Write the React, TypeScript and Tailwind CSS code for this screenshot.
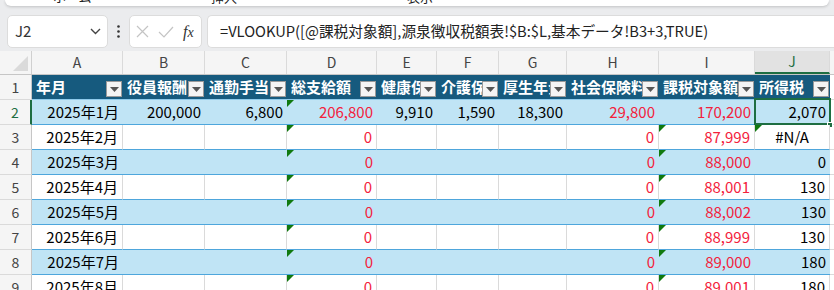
import React from "react";

const font = { fontFamily: '"Noto Sans CJK JP", "Noto Sans", sans-serif' };

const cols = [
  { l: "A", w: "w-[91px]", h: "年月" },
  { l: "B", w: "w-[82px]", h: "役員報酬" },
  { l: "C", w: "w-[82px]", h: "通勤手当" },
  { l: "D", w: "w-[90px]", h: "総支給額" },
  { l: "E", w: "w-[60px]", h: "健康保険料" },
  { l: "F", w: "w-[62px]", h: "介護保険料" },
  { l: "G", w: "w-[68px]", h: "厚生年金保険料" },
  { l: "H", w: "w-[92px]", h: "社会保険料計" },
  { l: "I", w: "w-[96px]", h: "課税対象額" },
  { l: "J", w: "w-[75px]", h: "所得税" },
];

const red = [3, 7, 8];

const rows: string[][] = [
  ["2025年1月", "200,000", "6,800", "206,800", "9,910", "1,590", "18,300", "29,800", "170,200", "2,070"],
  ["2025年2月", "", "", "0", "", "", "", "0", "87,999", "#N/A"],
  ["2025年3月", "", "", "0", "", "", "", "0", "88,000", "0"],
  ["2025年4月", "", "", "0", "", "", "", "0", "88,001", "130"],
  ["2025年5月", "", "", "0", "", "", "", "0", "88,002", "130"],
  ["2025年6月", "", "", "0", "", "", "", "0", "88,999", "130"],
  ["2025年7月", "", "", "0", "", "", "", "0", "89,000", "180"],
  ["2025年8月", "", "", "0", "", "", "", "0", "89,001", "180"],
];

function Flag() {
  return (
    <svg className="absolute left-0 top-0" width="7" height="7" viewBox="0 0 7 7">
      <polygon points="0,0 7,0 0,7" fill="#10790f" />
    </svg>
  );
}

function FilterButton() {
  return (
    <div className="absolute right-[1px] bottom-[2px] w-[16px] h-[16px] bg-[#f4f4f4] border border-[#9a9a9a] flex items-center justify-center">
      <svg width="9" height="5" viewBox="0 0 9 5">
        <polygon points="0,0 9,0 4.5,5" fill="#555" />
      </svg>
    </div>
  );
}

export default function App() {
  return (
    <div className="w-[834px] h-[290px] overflow-hidden bg-[#ebecee] text-black" style={font}>
      {/* ribbon bottom edge */}
      <div className="mx-[5px] h-[6px] bg-white rounded-b-md shadow-[0_1px_3px_rgba(0,0,0,0.18)] overflow-hidden relative text-[13px] leading-none text-[#222]">
        <span className="absolute left-[48px] -top-[10px]">ホーム</span>
        <span className="absolute left-[206px] -top-[10px]">挿入</span>
        <span className="absolute left-[402px] -top-[10px]">表示</span>
      </div>

      {/* formula bar */}
      <div className="flex items-center h-[33px] mt-[9px] pl-[7px]">
        <div className="w-[101px] h-[33px] bg-white rounded-[5px] border border-[#dcdcdc] flex items-center justify-between pl-[7px] pr-[6px] text-[15px] text-[#333]">
          <span>J2</span>
          <svg width="11" height="7" viewBox="0 0 11 7">
            <path d="M1 1 L5.5 5.5 L10 1" stroke="#444" strokeWidth="1.4" fill="none" />
          </svg>
        </div>
        <div className="w-[21px] flex justify-center">
          <svg width="3" height="13" viewBox="0 0 3 13">
            <circle cx="1.5" cy="1.5" r="1.3" fill="#333" />
            <circle cx="1.5" cy="6.5" r="1.3" fill="#333" />
            <circle cx="1.5" cy="11.5" r="1.3" fill="#333" />
          </svg>
        </div>
        <div className="w-[73px] h-[33px] bg-white rounded-[5px] border border-[#dcdcdc] flex items-center pl-[6px] gap-[9px]">
          <svg width="13" height="13" viewBox="0 0 13 13">
            <path d="M1 1 L12 12 M12 1 L1 12" stroke="#c4c4c4" strokeWidth="1.2" />
          </svg>
          <svg width="16" height="12" viewBox="0 0 16 12">
            <path d="M1 6 L6 11 L15 1" stroke="#c4c4c4" strokeWidth="1.2" fill="none" />
          </svg>
          <span className="text-[16px] italic text-[#333] leading-none" style={{ fontFamily: '"Liberation Serif", serif' }}>
            f<span className="text-[14px]">x</span>
          </span>
        </div>
        <div className="ml-[5px] flex-1 h-[33px] bg-white rounded-l-[5px] border border-r-0 border-[#dcdcdc] flex items-center pl-[12px] text-[14.7px] text-[#222] whitespace-nowrap">
          =VLOOKUP([@課税対象額],源泉徴収税額表!$B:$L,基本データ!B3+3,TRUE)
        </div>
      </div>

      {/* grid */}
      <div className="mt-[3px] bg-white">
        {/* column headers */}
        <div className="flex h-[24px] bg-[#f5f5f5] border-b border-[#c6c6c6] text-[14px] text-[#444]">
          <div className="w-[32px] shrink-0 relative border-r border-[#d0d0d0]">
            <svg className="absolute right-[3px] bottom-[3px]" width="15" height="15" viewBox="0 0 15 15">
              <polygon points="15,0 15,15 0,15" fill="#dadada" />
            </svg>
          </div>
          {cols.map((c) => (
            <div
              key={c.l}
              className={`${c.w} shrink-0 flex items-center justify-center border-r border-[#dadada] ${
                c.l === "J" ? "bg-[#e2e2e2] text-[#1e6e42] border-b-2 border-b-[#1e6e42]" : ""
              }`}
            >
              {c.l}
            </div>
          ))}
          <div className="flex-1" />
        </div>

        {/* row 1: table header */}
        <div className="flex h-[25px]">
          <div className="w-[32px] shrink-0 bg-[#f5f5f5] border-r border-[#c6c6c6] border-b border-b-[#dadada] flex items-center justify-center text-[14px] text-[#444]">
            1
          </div>
          {cols.map((c) => (
            <div
              key={c.l}
              className={`${c.w} shrink-0 relative bg-[#165a7e] border-b border-[#8fcbec] overflow-hidden`}
            >
              <div className="absolute left-[4px] right-[17px] top-[1px] overflow-hidden text-[15px] font-bold text-white whitespace-nowrap">
                {c.h}
              </div>
              <FilterButton />
            </div>
          ))}
          <div className="flex-1 border-b border-[#dadada]" />
        </div>

        {/* data rows */}
        {rows.map((r, i) => {
          const n = i + 2;
          const blue = n % 2 === 0;
          return (
            <div key={n} className="flex h-[25px]">
              <div
                className={`w-[32px] shrink-0 bg-[#f5f5f5] border-b border-[#dadada] flex items-center justify-center text-[14px] ${
                  n === 2 ? "text-[#1e6e42] border-r-2 border-r-[#1e6e42]" : "text-[#444] border-r border-r-[#c6c6c6]"
                }`}
              >
                {n}
              </div>
              {cols.map((c, j) => {
                const v = r[j];
                const isRed = red.includes(j);
                const flag = j === 3 || (j === 8 && n >= 3) || (j === 9 && n === 3);
                const selected = n === 2 && j === 9;
                return (
                  <div
                    key={c.l}
                    className={`${c.w} shrink-0 relative border-b border-[#4ea6dc] flex items-center pt-[1px] text-[15px] ${
                      blue ? "bg-[#c0e4f5]" : "bg-white border-r border-r-[#dadada]"
                    } ${v === "#N/A" ? "justify-center" : "justify-end pr-[4px]"} ${
                      isRed ? "text-[#f3213c]" : "text-black"
                    }`}
                  >
                    {flag && <Flag />}
                    <span className="relative">{v}</span>
                    {selected && (
                      <>
                        <div className="absolute -left-[1px] -top-[2px] -right-[1px] -bottom-[1px] border-2 border-[#1e6e42]" />
                        <div className="absolute -right-[3px] -bottom-[4px] w-[6px] h-[6px] bg-[#1e6e42] border border-white" />
                      </>
                    )}
                  </div>
                );
              })}
              <div className="flex-1 border-b border-[#dadada]" />
            </div>
          );
        })}
      </div>
    </div>
  );
}
